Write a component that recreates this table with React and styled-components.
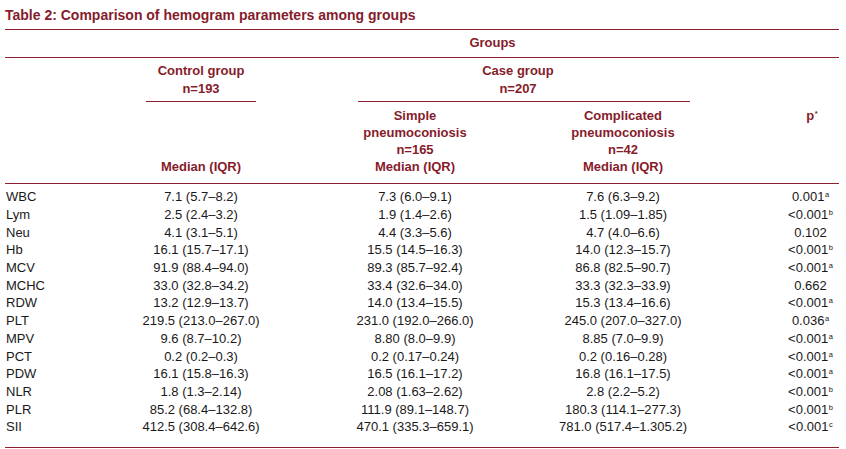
import React from 'react';
import styled, { createGlobalStyle } from 'styled-components';

const maroon = '#861c2b';
const rule = '#8a1f2d';

const GlobalStyle = createGlobalStyle`
  body {
    margin: 0;
    background: #ffffff;
    font-family: 'Liberation Sans', Arial, sans-serif;
  }
`;

const cols = '141px 110px 102px 114px 302px 65px';

const rows = [
  ['WBC', '7.1 (5.7–8.2)', '7.3 (6.0–9.1)', '7.6 (6.3–9.2)', '0.001', 'a'],
  ['Lym', '2.5 (2.4–3.2)', '1.9 (1.4–2.6)', '1.5 (1.09–1.85)', '<0.001', 'b'],
  ['Neu', '4.1 (3.1–5.1)', '4.4 (3.3–5.6)', '4.7 (4.0–6.6)', '0.102', ''],
  ['Hb', '16.1 (15.7–17.1)', '15.5 (14.5–16.3)', '14.0 (12.3–15.7)', '<0.001', 'b'],
  ['MCV', '91.9 (88.4–94.0)', '89.3 (85.7–92.4)', '86.8 (82.5–90.7)', '<0.001', 'a'],
  ['MCHC', '33.0 (32.8–34.2)', '33.4 (32.6–34.0)', '33.3 (32.3–33.9)', '0.662', ''],
  ['RDW', '13.2 (12.9–13.7)', '14.0 (13.4–15.5)', '15.3 (13.4–16.6)', '<0.001', 'a'],
  ['PLT', '219.5 (213.0–267.0)', '231.0 (192.0–266.0)', '245.0 (207.0–327.0)', '0.036', 'a'],
  ['MPV', '9.6 (8.7–10.2)', '8.80 (8.0–9.9)', '8.85 (7.0–9.9)', '<0.001', 'a'],
  ['PCT', '0.2 (0.2–0.3)', '0.2 (0.17–0.24)', '0.2 (0.16–0.28)', '<0.001', 'a'],
  ['PDW', '16.1 (15.8–16.3)', '16.5 (16.1–17.2)', '16.8 (16.1–17.5)', '<0.001', 'a'],
  ['NLR', '1.8 (1.3–2.14)', '2.08 (1.63–2.62)', '2.8 (2.2–5.2)', '<0.001', 'b'],
  ['PLR', '85.2 (68.4–132.8)', '111.9 (89.1–148.7)', '180.3 (114.1–277.3)', '<0.001', 'b'],
  ['SII', '412.5 (308.4–642.6)', '470.1 (335.3–659.1)', '781.0 (517.4–1.305.2)', '<0.001', 'c'],
];

const Page = styled.div`
  width: 834px;
  padding-left: 5px;
`;

const Title = styled.h1`
  margin: 0;
  padding: 6px 0 5px;
  font-size: 14px;
  line-height: 18px;
  font-weight: 700;
  color: ${maroon};
  border-bottom: 1.5px solid ${rule};
`;

const Band = styled.div`
  display: grid;
  grid-template-columns: ${cols};
  border-bottom: ${(p) => (p.$ruled ? `1.5px solid ${rule}` : 'none')};
  padding: ${(p) => p.$pad || '0'};
`;

const Head = styled.div`
  grid-column: ${(p) => p.$col};
  margin-right: ${(p) => p.$trim || 0}px;
  align-self: ${(p) => p.$align || 'start'};
  display: flex;
  flex-direction: column;
  align-items: center;
  padding: ${(p) => p.$pad || '0'};
  padding-left: ${(p) => p.$shift || 0}px;
  font-size: 13px;
  line-height: ${(p) => p.$lh || 17}px;
  font-weight: 700;
  color: ${maroon};
  white-space: nowrap;
  border-bottom: ${(p) => (p.$ruled ? `1.5px solid ${rule}` : 'none')};
`;

const Body = styled.div`
  padding: 4.5px 0 11px;
  border-bottom: 1.5px solid ${rule};
`;

const DataRow = styled.div`
  display: grid;
  grid-template-columns: ${cols};
  height: 17.7px;
  align-items: center;
  font-size: 13px;
  color: #1a1819;
`;

const Label = styled.div`
  padding-left: 1px;
  white-space: nowrap;
`;

const Value = styled.div`
  grid-column: ${(p) => p.$col};
  display: flex;
  justify-content: center;
  white-space: nowrap;
  padding-left: ${(p) => p.$shift || 0}px;
`;

const Sup = styled.sup`
  font-size: 7.5px;
  line-height: 0;
  vertical-align: 4px;
  margin-left: 0.5px;
`;

export default function App() {
  return (
    <Page>
      <GlobalStyle />
      <Title>Table 2: Comparison of hemogram parameters among groups</Title>

      <Band $ruled $pad="4px 0 5.5px">
        <Head $col="2 / 7">Groups</Head>
      </Band>

      <Band $pad="0.5px 0 0">
        <Head $col="2" $lh={18} $pad="4px 0 3px" $ruled>
          <span>Control group</span>
          <span>n=193</span>
        </Head>
        <Head $col="4 / 6" $trim={84} $lh={18} $pad="4px 12px 3px 0" $ruled>
          <span>Case group</span>
          <span>n=207</span>
        </Head>
      </Band>

      <Band $ruled $pad="4.5px 0 8px">
        <Head $col="2" $align="end">Median (IQR)</Head>
        <Head $col="4">
          <span>Simple</span>
          <span>pneumoconiosis</span>
          <span>n=165</span>
          <span>Median (IQR)</span>
        </Head>
        <Head $col="5">
          <span>Complicated</span>
          <span>pneumoconiosis</span>
          <span>n=42</span>
          <span>Median (IQR)</span>
        </Head>
        <Head $col="6" $shift={11}>
          <span>
            p<Sup>*</Sup>
          </span>
        </Head>
      </Band>

      <Body>
        {rows.map(([name, control, simple, complicated, p, mark]) => (
          <DataRow key={name}>
            <Label>{name}</Label>
            <Value $col="2">{control}</Value>
            <Value $col="4">{simple}</Value>
            <Value $col="5">{complicated}</Value>
            <Value $col="6" $shift={8}>
              <span>
                {p}
                {mark && <Sup>{mark}</Sup>}
              </span>
            </Value>
          </DataRow>
        ))}
      </Body>
    </Page>
  );
}
